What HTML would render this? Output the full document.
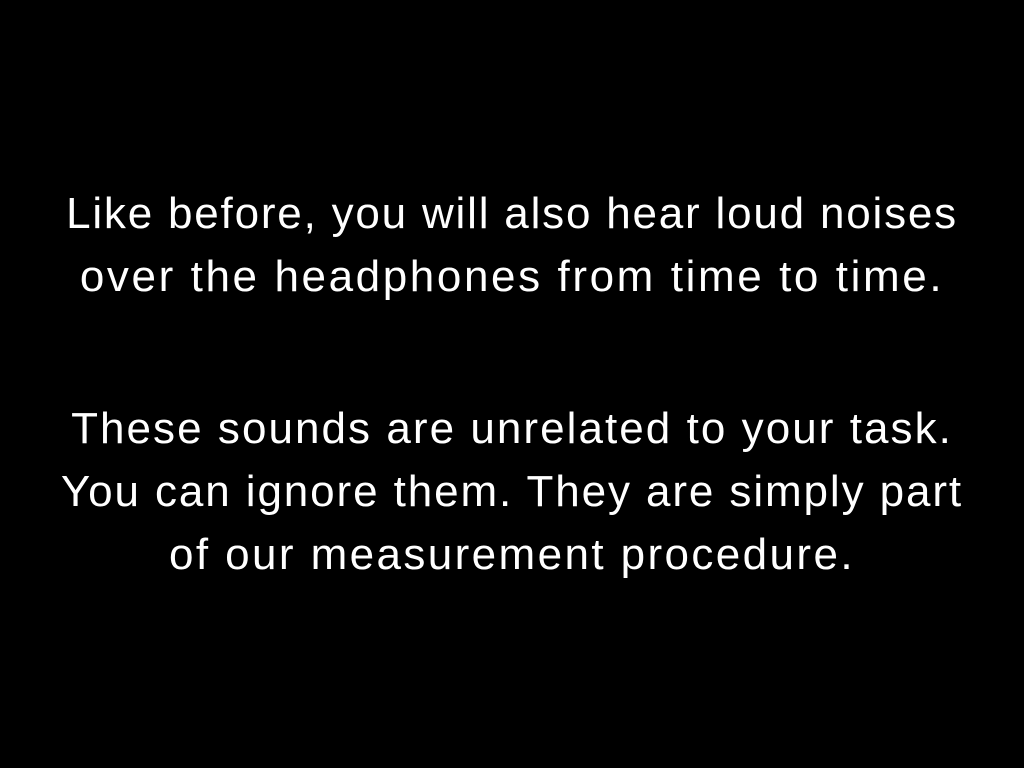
<!DOCTYPE html>
<html><head><meta charset="utf-8"><style>
html,body{margin:0;padding:0;background:#000;width:1024px;height:768px;overflow:hidden}
.l{position:absolute;left:0;width:1024px;text-align:center;color:#fff;font-family:"Liberation Sans",sans-serif;font-size:44px;letter-spacing:1.8px;line-height:63px;height:63px;white-space:nowrap}
</style></head><body>
<div class="l" style="top:182px">Like before, you will also hear loud noises</div>
<div class="l" style="top:245px;letter-spacing:2.6px">over the headphones from time to time.</div>
<div class="l" style="top:397px;letter-spacing:2.05px">These sounds are unrelated to your task.</div>
<div class="l" style="top:460px;letter-spacing:1.9px">You can ignore them. They are simply part</div>
<div class="l" style="top:523px;letter-spacing:2.4px">of our measurement procedure.</div>
</body></html>
